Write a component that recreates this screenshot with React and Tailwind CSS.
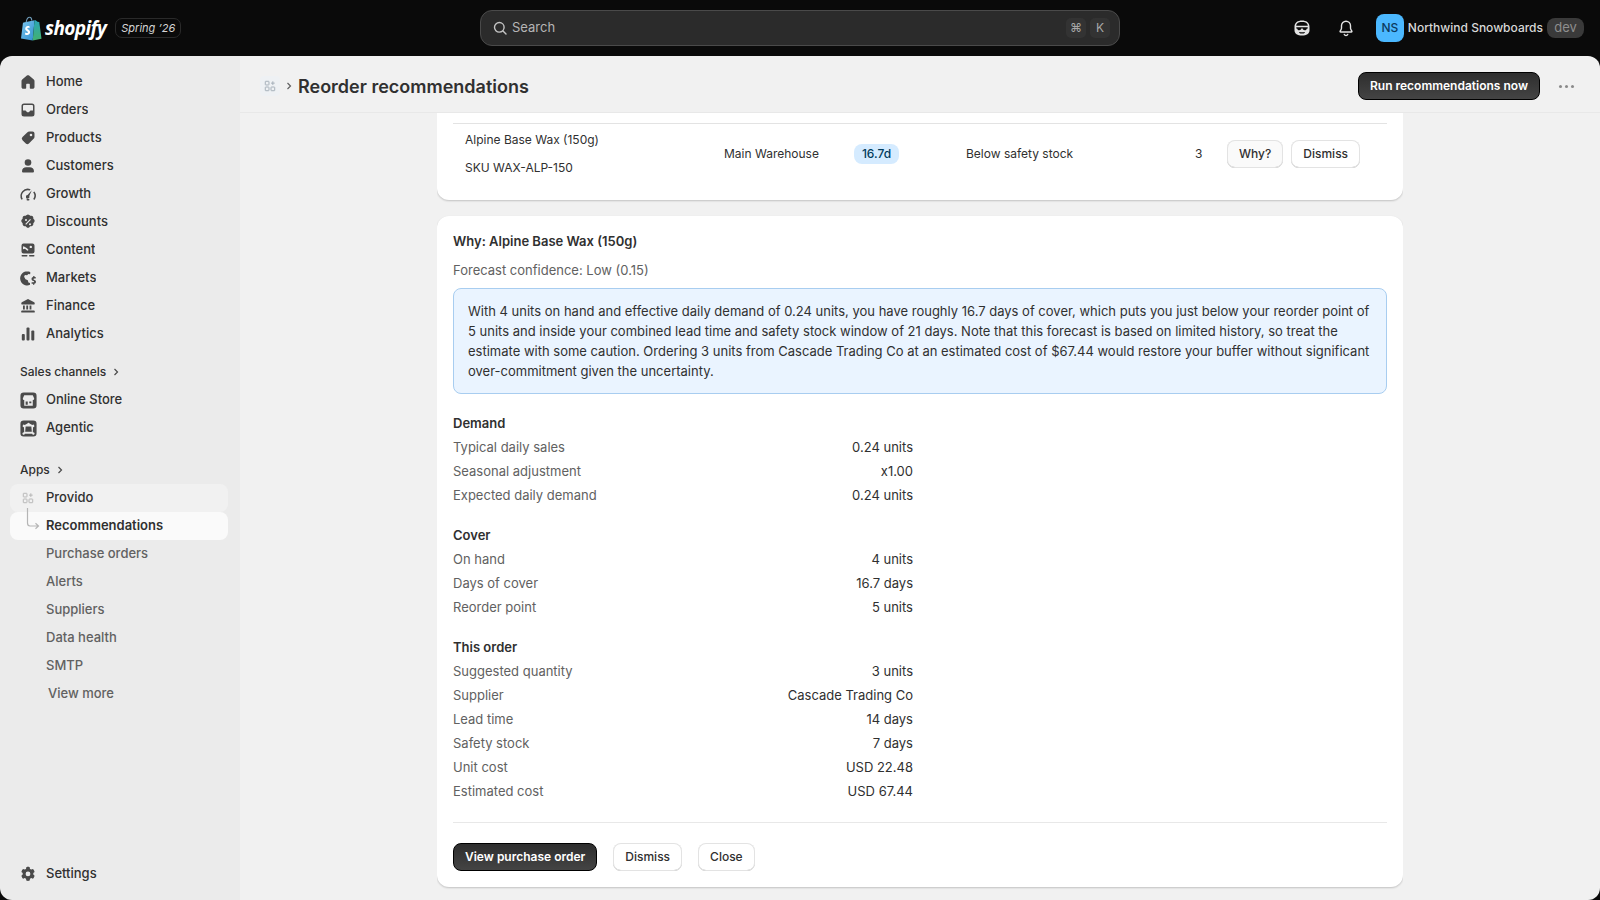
import React from "react";

const Glyph = ({ children, size = 20, className = "" }) => (
  <svg width={size} height={size} viewBox="0 0 20 20" fill="currentColor" className={className}>
    {children}
  </svg>
);

const HomeIcon = () => (
  <Glyph>
    <path d="M10 3.2c-.4 0-.8.14-1.1.4L4.2 7.5c-.45.38-.7.9-.7 1.500v6c0 1 .8 1.800 1.800 1.800h1.900c.55 0 1-.45 1-1v-3.300c0-.4.300-.7.700-.7h2.200c.4 0 .7.300.7.700v3.300c0 .55.45 1 1 1h1.900c1 0 1.800-.8 1.800-1.800V9c0-.6-.25-1.120-.7-1.500l-4.700-3.900c-.3-.26-.7-.4-1.100-.4Z" />
  </Glyph>
);
const OrdersIcon = () => (
  <Glyph>
    <path fillRule="evenodd" d="M6 3.500h8A2.500 2.500 0 0 1 16.500 6v8a2.500 2.500 0 0 1-2.500 2.500H6A2.500 2.500 0 0 1 3.500 14V6A2.500 2.500 0 0 1 6 3.500Zm0 1.500a1 1 0 0 0-1 1v4.500h2.300c.5 0 .9.300 1.050.750.200.600.800 1 1.650 1s1.450-.400 1.650-1c.150-.450.550-.750 1.050-.750H15V6a1 1 0 0 0-1-1H6Z" />
  </Glyph>
);
const TagIcon = () => (
  <Glyph>
    <path fillRule="evenodd" d="M11.300 3.500h3.200A2 2 0 0 1 16.500 5.500v3.200c0 .800-.300 1.550-.900 2.100l-4.700 4.700a2.200 2.200 0 0 1-3.100 0l-3.300-3.300a2.200 2.200 0 0 1 0-3.100l4.700-4.700c.550-.600 1.300-.900 2.100-.900Zm1.700 4.800a1.300 1.300 0 1 0 0-2.600 1.300 1.300 0 0 0 0 2.600Z" />
  </Glyph>
);
const PersonIcon = () => (
  <Glyph>
    <circle cx="10" cy="6.500" r="3.300" />
    <path d="M4 15.200c0-2.300 1.900-3.900 4.200-3.900h3.600c2.300 0 4.200 1.600 4.200 3.900 0 .800-.600 1.300-1.300 1.300H5.300c-.700 0-1.300-.500-1.300-1.300Z" />
  </Glyph>
);
const GaugeIcon = () => (
  <Glyph>
    <path d="M3.500 15.800A7.300 7.300 0 0 1 12.600 5.300l-.800 1.300A5.800 5.800 0 0 0 4.800 15Z" />
    <path d="M13.800 6.200 11.300 12a1.800 1.800 0 1 1-1.700-1Z" />
    <path d="M15.200 8.300a5.800 5.800 0 0 1 0 6.800l1.200.900a7.300 7.300 0 0 0 .1-8.500Z" />
    <rect x="8.500" y="15" width="3" height="1.600" rx=".8" />
  </Glyph>
);
const DiscountIcon = () => (
  <Glyph>
    <path fillRule="evenodd" d="M8.600 3c.750-.700 2-.700 2.750 0l.850.800 1.150-.050c1.050-.050 1.900.800 1.950 1.850l.050 1.150.800.850c.700.750.700 2 0 2.750l-.800.850-.050 1.150c-.050 1.050-.900 1.900-1.950 1.950l-1.150.050-.850.800c-.750.700-2 .700-2.750 0l-.850-.800-1.150-.050c-1.050-.050-1.900-.900-1.950-1.950l-.050-1.150-.800-.850c-.700-.750-.700-2 0-2.750l.800-.850.050-1.150c.050-1.050.900-1.900 1.950-1.850l1.150.050.850-.800Zm3.500 4-4.800 5 .800.800 4.800-5-.800-.800ZM8 8.900a1 1 0 1 0 0-2 1 1 0 0 0 0 2Zm4 4.300a1 1 0 1 0 0-2 1 1 0 0 0 0 2Z" />
  </Glyph>
);
const ContentIcon = () => (
  <Glyph>
    <path fillRule="evenodd" d="M5.500 3.500h9A2 2 0 0 1 16.500 5.500v6a2 2 0 0 1-2 2h-9a2 2 0 0 1-2-2v-6a2 2 0 0 1 2-2Zm7.300 2.200a1.200 1.200 0 1 0 0 2.400 1.200 1.200 0 0 0 0-2.400ZM5 9.200V7a.7.700 0 0 1 1-.600l3 1.800 1.600 1.800-1.200.700L7 8.700Z" />
    <rect x="3.500" y="15" width="6" height="1.500" rx=".7" />
    <rect x="11" y="15" width="5.500" height="1.500" rx=".7" />
  </Glyph>
);
const MarketsIcon = () => (
  <Glyph>
    <path d="M10.800 3.600A7 7 0 1 0 12 16.800v-1.700l-1.600-.700-.600-2.200-2.300-1-1.400-2.400.800-1.800 2.200.300 1.300-1.300 1.700.300.300-1.900a7 7 0 0 0-1.600-.800Z" />
    <path d="M15.200 8v1a2 2 0 0 0-.300 3.900l.600.200a.600.600 0 0 1-.200 1.200h-1.700v1.500h1.400v1h1.300v-1a2 2 0 0 0 .300-3.900l-.600-.200a.600.600 0 0 1 .200-1.200h1.500V9h-1.200V8Z" />
  </Glyph>
);
const BankIcon = () => (
  <Glyph>
    <path d="M10 3 3.800 6.300c-.300.200-.500.500-.500.900v.800c0 .300.200.500.500.500h12.400c.300 0 .500-.200.500-.500v-.800c0-.400-.200-.700-.500-.900Z" />
    <path d="M5 9.500h1.800v4H5Zm3.300 0h1.800v4H8.300Zm3.300 0h1.800v4h-1.800Z" />
    <path d="M4 14.500h12c.400 0 .700.300.700.700v1.300H3.300v-1.300c0-.400.300-.700.700-.700Z" />
  </Glyph>
);
const ChartIcon = () => (
  <Glyph>
    <rect x="3.800" y="10" width="3" height="6.500" rx="1" />
    <rect x="8.500" y="3.500" width="3" height="13" rx="1" />
    <rect x="13.300" y="6.500" width="3" height="10" rx="1" />
  </Glyph>
);
const StoreIcon = () => (
  <Glyph size={19}>
    <path fillRule="evenodd" d="M5 1.500h10A3.500 3.500 0 0 1 18.500 5v10a3.500 3.500 0 0 1-3.500 3.500H5A3.500 3.500 0 0 1 1.500 15V5A3.500 3.500 0 0 1 5 1.500Zm.500 3L4 7.800c0 1 .800 1.700 1.500 1.700V15.500h9V9.500c.700 0 1.500-.700 1.500-1.700l-1.500-3.300h-9Zm1.500 6.500h2.200v3.500H7V11Zm3.800 0H13v2h-2.200v-2Z" />
  </Glyph>
);
const AgenticIcon = () => (
  <Glyph size={19}>
    <path fillRule="evenodd" d="M5 1.500h10A3.500 3.500 0 0 1 18.500 5v10a3.500 3.500 0 0 1-3.500 3.500H5A3.500 3.500 0 0 1 1.500 15V5A3.500 3.500 0 0 1 5 1.500ZM10 4a1.200 1.200 0 0 0-1.100.800L6 6.300a1.300 1.300 0 1 0-.800 2.300l.300 5-1 .500a1.300 1.300 0 1 0 1.700 1.500h7.600a1.300 1.300 0 1 0 1.700-1.500l-1-.500.300-5a1.300 1.300 0 1 0-.800-2.300l-2.900-1.500A1.200 1.200 0 0 0 10 4Zm-3 4h6l.500 5.500h-7L7 8Z" />
  </Glyph>
);
const GearIcon = () => (
  <Glyph>
    <path fillRule="evenodd" d="M8.300 3.200c.900-.500 2.500-.500 3.400 0l.300 1.700 1.300.700 1.600-.600c.700.600 1.500 2 1.700 3l-1.300 1.100v1.500l1.300 1.100c-.200 1-1 2.400-1.700 3l-1.600-.600-1.300.700-.300 1.700c-.900.500-2.500.500-3.400 0L8 14.800l-1.300-.700-1.600.600c-.700-.600-1.500-2-1.700-3l1.300-1.100V9.100L3.400 8c.200-1 1-2.400 1.700-3l1.600.600L8 4.900l.300-1.700ZM10 12.300a2.400 2.400 0 1 0 0-4.800 2.400 2.400 0 0 0 0 4.800Z" />
  </Glyph>
);
const AppGridIcon = ({ size = 14 }) => (
  <svg width={size} height={size} viewBox="0 0 14 14" fill="none" stroke="currentColor" strokeWidth="1.100">
    <rect x="1.500" y="1.500" width="4.300" height="4.300" rx=".6" />
    <rect x="1.500" y="8.200" width="4.300" height="4.300" rx=".6" />
    <rect x="8.200" y="8.200" width="4.300" height="4.300" rx=".6" />
    <path d="M10.300 1.500v4.300M8.200 3.650h4.300" />
  </svg>
);
const Chevron = ({ className = "" }) => (
  <svg width="8" height="10" viewBox="0 0 8 10" fill="none" stroke="currentColor" strokeWidth="1.200" className={className}>
    <path d="m2.500 2 3 3-3 3" />
  </svg>
);

const ShopifyBag = () => (
  <svg width="22" height="25" viewBox="0 0 22 25">
    <defs>
      <linearGradient id="bagLeft" x1="0" y1="0" x2="1" y2="1">
        <stop offset="0" stopColor="#7ec8ef" />
        <stop offset="1" stopColor="#2f8fd0" />
      </linearGradient>
      <linearGradient id="bagRight" x1="0" y1="0" x2="0" y2="1">
        <stop offset="0" stopColor="#2aa7b8" />
        <stop offset="1" stopColor="#43b06f" />
      </linearGradient>
    </defs>
    <path d="M14.500 4.200 12.700 24.600 1 22.500 2.900 7.200c.100-.500.300-.700.800-.800Z" fill="url(#bagLeft)" />
    <path d="M14.500 4.200c.800 0 1.500.100 1.700.500l1.300 1.100 1.500.100c.200 0 .300.200.300.300L21.500 22.800l-8.800 1.800Z" fill="url(#bagRight)" />
    <path d="M6.200 6.200C6.600 3.300 8 1.200 9.700 1.200c1.400 0 2 1.400 2 3.200" fill="none" stroke="#6f9bb8" strokeWidth="1.100" />
    <path d="M9.500 10.300c-.500-.300-1.200-.400-1.800-.300-1.600.200-2.500 1.400-2.500 2.700 0 2 2.700 2.300 2.700 3.500 0 .600-.500.900-1 .900-.700 0-1.500-.500-1.500-.500l-.500 1.600s.900.800 2.300.800c1.800 0 2.900-1.300 2.900-2.900 0-2.300-2.800-2.600-2.800-3.600 0-.400.300-.8 1-.8.500 0 1.200.300 1.200.300Z" fill="#fff" />
  </svg>
);

const Kbd = ({ children }) => (
  <span className="flex h-5 w-5 items-center justify-center rounded-[5px] bg-[#333333] text-[12px] text-[#a8a8a8]">
    {children}
  </span>
);

const TopBar = () => (
  <header className="grid h-14 shrink-0 grid-cols-[480px_640px_1fr] items-center bg-[#0a0a0a]">
    <div className="flex items-center pl-[20px]">
      <ShopifyBag />
      <span className="ml-[3px] font-['Open_Sans',sans-serif] text-[19px] font-bold italic leading-none tracking-[-0.6px] text-white">
        shopify
      </span>
      <span className="ml-[9px] flex h-5 items-center rounded-[7px] border border-[#2a2a2a] px-[5px] text-[11px] italic text-[#d4d4d4]">
        Spring ’26
      </span>
    </div>
    <div className="flex h-9 items-center rounded-xl border border-[#4a4a4a] bg-[#2b2b2b] pl-[11px] pr-[9px]">
      <svg width="16" height="16" viewBox="0 0 16 16" fill="none" stroke="#c4c4c4" strokeWidth="1.400" strokeLinecap="round">
        <circle cx="7.300" cy="7.300" r="4.800" />
        <path d="m11 11 3 3" />
      </svg>
      <span className="ml-1 text-[13px] text-[#b5b5b5]">Search</span>
      <div className="ml-auto flex gap-1">
        <Kbd>⌘</Kbd>
        <Kbd>K</Kbd>
      </div>
    </div>
    <div className="flex items-center justify-end pr-4 text-[#e3e3e3]">
      <svg width="18" height="18" viewBox="0 0 18 18" fill="currentColor" className="mr-[26px]">
        <path fillRule="evenodd" d="M9 1.500c4.200 0 7.500 2 7.500 6.200v3.800c0 3-3 5-7.500 5s-7.500-2-7.500-5V7.700C1.500 3.500 4.800 1.500 9 1.500ZM5.500 3.600c-1.200.500-2.200 1.700-2.300 3.100h11.600c-.100-1.400-1.100-2.600-2.300-3.100-1-.400-2.200-.500-3.500-.500s-2.500.100-3.500.500ZM3.300 8.200v1.300l1 .200c.200 1 1 1.600 2 1.600s1.900-.700 2-1.700h1.400c.100 1 1 1.700 2 1.700s1.800-.600 2-1.600l1-.200V8.200H3.300Zm2.700 5.600c.800.600 1.900.800 3 .800s2.200-.200 3-.800l-.600-.900c-.700.300-1.500.400-2.400.400s-1.700-.100-2.400-.400l-.600.900Z" />
      </svg>
      <svg width="18" height="18" viewBox="0 0 18 18" fill="none" stroke="currentColor" strokeWidth="1.400" strokeLinejoin="round" className="mr-[21px]">
        <path d="M9 2.200a4.500 4.500 0 0 0-4.500 4.500v2.600c0 .800-.600 1.700-1.300 2.700-.300.400-.100 1 .500 1h10.600c.600 0 .800-.600.500-1-.700-1-1.300-1.900-1.300-2.700V6.700A4.500 4.500 0 0 0 9 2.200Z" />
        <path d="M7.300 15.500c.300.700 1 1 1.700 1s1.400-.300 1.700-1" strokeLinecap="round" />
      </svg>
      <span className="flex h-7 w-7 items-center justify-center rounded-lg bg-[#4bb8ff] text-[12px] font-medium text-[#0b3a5e]">
        NS
      </span>
      <span className="ml-1 text-[12px] font-medium text-[#d8d8d8]">Northwind Snowboards</span>
      <span className="ml-1 flex h-5 w-[37px] items-center justify-center rounded-lg bg-[#3a3a3a] text-[13px] text-[#8e8e8e]">dev</span>
    </div>
  </header>
);

const NavItem = ({ icon, label, className = "" }) => (
  <div className={`flex h-7 items-center rounded-lg pl-[8px] ${className}`}>
    <span className="flex w-5 shrink-0 items-center justify-center text-[#4a4a4a]">{icon}</span>
    <span className="ml-[8px] truncate">{label}</span>
  </div>
);

const SubItem = ({ label, className = "" }) => (
  <div className={`flex h-7 items-center pl-[36px] text-[#616161] ${className}`}>{label}</div>
);

const SectionLabel = ({ label, className = "" }) => (
  <div className={`flex h-7 items-center gap-[6px] pl-[10px] text-[12px] font-medium text-[#303030] ${className}`}>
    {label}
    <Chevron className="text-[#4a4a4a]" />
  </div>
);

const mainNav = [
  ["Home", <HomeIcon />],
  ["Orders", <OrdersIcon />],
  ["Products", <TagIcon />],
  ["Customers", <PersonIcon />],
  ["Growth", <GaugeIcon />],
  ["Discounts", <DiscountIcon />],
  ["Content", <ContentIcon />],
  ["Markets", <MarketsIcon />],
  ["Finance", <BankIcon />],
  ["Analytics", <ChartIcon />],
];

const Sidebar = () => (
  <aside className="flex w-[240px] shrink-0 flex-col bg-[#ebebeb] pb-3 pl-[10px] pr-3 pt-3 text-[13px] font-[450] text-[#303030]">
    {mainNav.map(([label, icon]) => (
      <NavItem key={label} label={label} icon={icon} />
    ))}
    <SectionLabel label="Sales channels" className="mt-[10px]" />
    <NavItem label="Online Store" icon={<StoreIcon />} />
    <NavItem label="Agentic" icon={<AgenticIcon />} />
    <SectionLabel label="Apps" className="mt-[14px]" />
    <div className="relative">
      <div className="flex h-7 items-center rounded-lg bg-[#f1f1f1] pl-[8px] font-medium text-[#303030]">
        <span className="flex w-5 justify-center text-[#b5b5b5]">
          <AppGridIcon size={12} />
        </span>
        <span className="ml-[8px]">Provido</span>
      </div>
      <div className="flex h-7 items-center rounded-lg bg-[#fafafa] pl-[36px] font-semibold text-[#303030]">Recommendations</div>
      <svg width="14" height="24" viewBox="0 0 14 24" fill="none" stroke="#b5b5b5" strokeWidth="1.200" className="absolute left-[16px] top-[24px]">
        <path d="M1.500 0v15c0 2 1 3 2.500 3h8.500M9.500 15.300l3 2.700-3 2.700" />
      </svg>
    </div>
    <SubItem label="Purchase orders" />
    <SubItem label="Alerts" />
    <SubItem label="Suppliers" />
    <SubItem label="Data health" />
    <SubItem label="SMTP" />
    <SubItem label="View more" className="pl-[38px]" />
    <div className="mt-auto">
      <NavItem label="Settings" icon={<GearIcon />} />
    </div>
  </aside>
);

const Button = ({ children, className = "bg-white" }) => (
  <button className={`flex h-7 items-center rounded-lg px-3 text-[12px] font-medium text-[#303030] shadow-[inset_0_0_0_1px_#e3e3e3,inset_0_-1px_0_#b5b5b5] ${className}`}>
    {children}
  </button>
);

const PrimaryButton = ({ children }) => (
  <button className="flex h-7 items-center rounded-lg border border-black bg-gradient-to-b from-[#2e2e2e] to-[#444444] px-[11px] text-[12px] font-semibold text-white">
    {children}
  </button>
);

const KeyValues = ({ title, rows }) => (
  <section className="mt-4 w-[460px] first:mt-0">
    <h3 className="flex h-6 items-center font-semibold text-[#303030]">{title}</h3>
    {rows.map(([label, value]) => (
      <div key={label} className="flex h-6 items-center justify-between">
        <span className="text-[#616161]">{label}</span>
        <span className="text-[#303030]">{value}</span>
      </div>
    ))}
  </section>
);

const demand = [
  ["Typical daily sales", "0.24 units"],
  ["Seasonal adjustment", "x1.00"],
  ["Expected daily demand", "0.24 units"],
];
const cover = [
  ["On hand", "4 units"],
  ["Days of cover", "16.7 days"],
  ["Reorder point", "5 units"],
];
const thisOrder = [
  ["Suggested quantity", "3 units"],
  ["Supplier", "Cascade Trading Co"],
  ["Lead time", "14 days"],
  ["Safety stock", "7 days"],
  ["Unit cost", "USD 22.48"],
  ["Estimated cost", "USD 67.44"],
];

const Main = () => (
  <main className="flex min-w-0 flex-1 flex-col bg-[#f1f1f1] text-[13px] text-[#303030]">
    <div className="flex h-[57px] shrink-0 items-center border-b border-[#e8e8e8] pl-5 pr-[26px] pt-1">
      <span className="flex h-5 w-5 items-center justify-center rounded bg-[#eef1f4] text-[#a3adb8]">
        <AppGridIcon size={12} />
      </span>
      <Chevron className="ml-[5px] text-[#616161]" />
      <h1 className="ml-[5px] text-[18px] font-semibold text-[#303030]">Reorder recommendations</h1>
      <div className="ml-auto flex items-center">
        <PrimaryButton>Run recommendations now</PrimaryButton>
        <span className="ml-[19px] flex gap-[3px]">
          <i className="h-[3px] w-[3px] rounded-full bg-[#8a8a8a]" />
          <i className="h-[3px] w-[3px] rounded-full bg-[#8a8a8a]" />
          <i className="h-[3px] w-[3px] rounded-full bg-[#8a8a8a]" />
        </span>
      </div>
    </div>
    <div className="mx-auto flex w-[966px] flex-col gap-4 overflow-hidden pb-3">
      <div className="rounded-b-xl bg-white px-4 pb-4 pt-[10px] shadow-[0_1px_2px_rgba(0,0,0,0.2)]">
        <div className="grid h-[61px] grid-cols-[259px_130px_112px_229px_32px_1fr] items-center border-t border-[#e3e3e3] text-[12px]">
          <div className="flex flex-col gap-2 pl-3 leading-5">
            <span>Alpine Base Wax (150g)</span>
            <span>SKU WAX-ALP-150</span>
          </div>
          <div className="pl-3">Main Warehouse</div>
          <div className="pl-3">
            <span className="flex h-5 w-[45px] items-center justify-center rounded-lg bg-[#d5ebff] font-medium text-[#003a5a]">16.7d</span>
          </div>
          <div className="pl-3">Below safety stock</div>
          <div className="pl-3">3</div>
          <div className="flex gap-2 pl-3">
            <Button className="bg-[#fafafa]">Why?</Button>
            <Button>Dismiss</Button>
          </div>
        </div>
      </div>
      <div className="rounded-xl bg-white p-4 shadow-[0_1px_2px_rgba(0,0,0,0.2)]">
        <h2 className="flex h-5 items-center font-semibold">Why: Alpine Base Wax (150g)</h2>
        <p className="mt-2 leading-5 text-[#616161]">Forecast confidence: Low (0.15)</p>
        <div className="mt-2 rounded-lg border border-[#a8cdf0] bg-[#eaf4ff] px-[14px] py-3 leading-5">
          With 4 units on hand and effective daily demand of 0.24 units, you have roughly 16.7 days of cover, which puts you just below your reorder point of 5 units and inside your combined lead time and safety stock window of 21 days. Note that this forecast is based on limited history, so treat the estimate with some caution. Ordering 3 units from Cascade Trading Co at an estimated cost of $67.44 would restore your buffer without significant over-commitment given the uncertainty.
        </div>
        <div className="mt-[18px]">
          <KeyValues title="Demand" rows={demand} />
          <KeyValues title="Cover" rows={cover} />
          <KeyValues title="This order" rows={thisOrder} />
        </div>
        <div className="mt-[18px] flex gap-4 border-t border-[#e8e8e8] pt-5">
          <PrimaryButton>View purchase order</PrimaryButton>
          <Button>Dismiss</Button>
          <Button>Close</Button>
        </div>
      </div>
    </div>
  </main>
);

export default function App() {
  return (
    <div className="flex h-screen flex-col overflow-hidden bg-[#0a0a0a] font-['Inter',sans-serif]">
      <TopBar />
      <div className="flex min-h-0 flex-1 overflow-hidden rounded-xl">
        <Sidebar />
        <Main />
      </div>
    </div>
  );
}
